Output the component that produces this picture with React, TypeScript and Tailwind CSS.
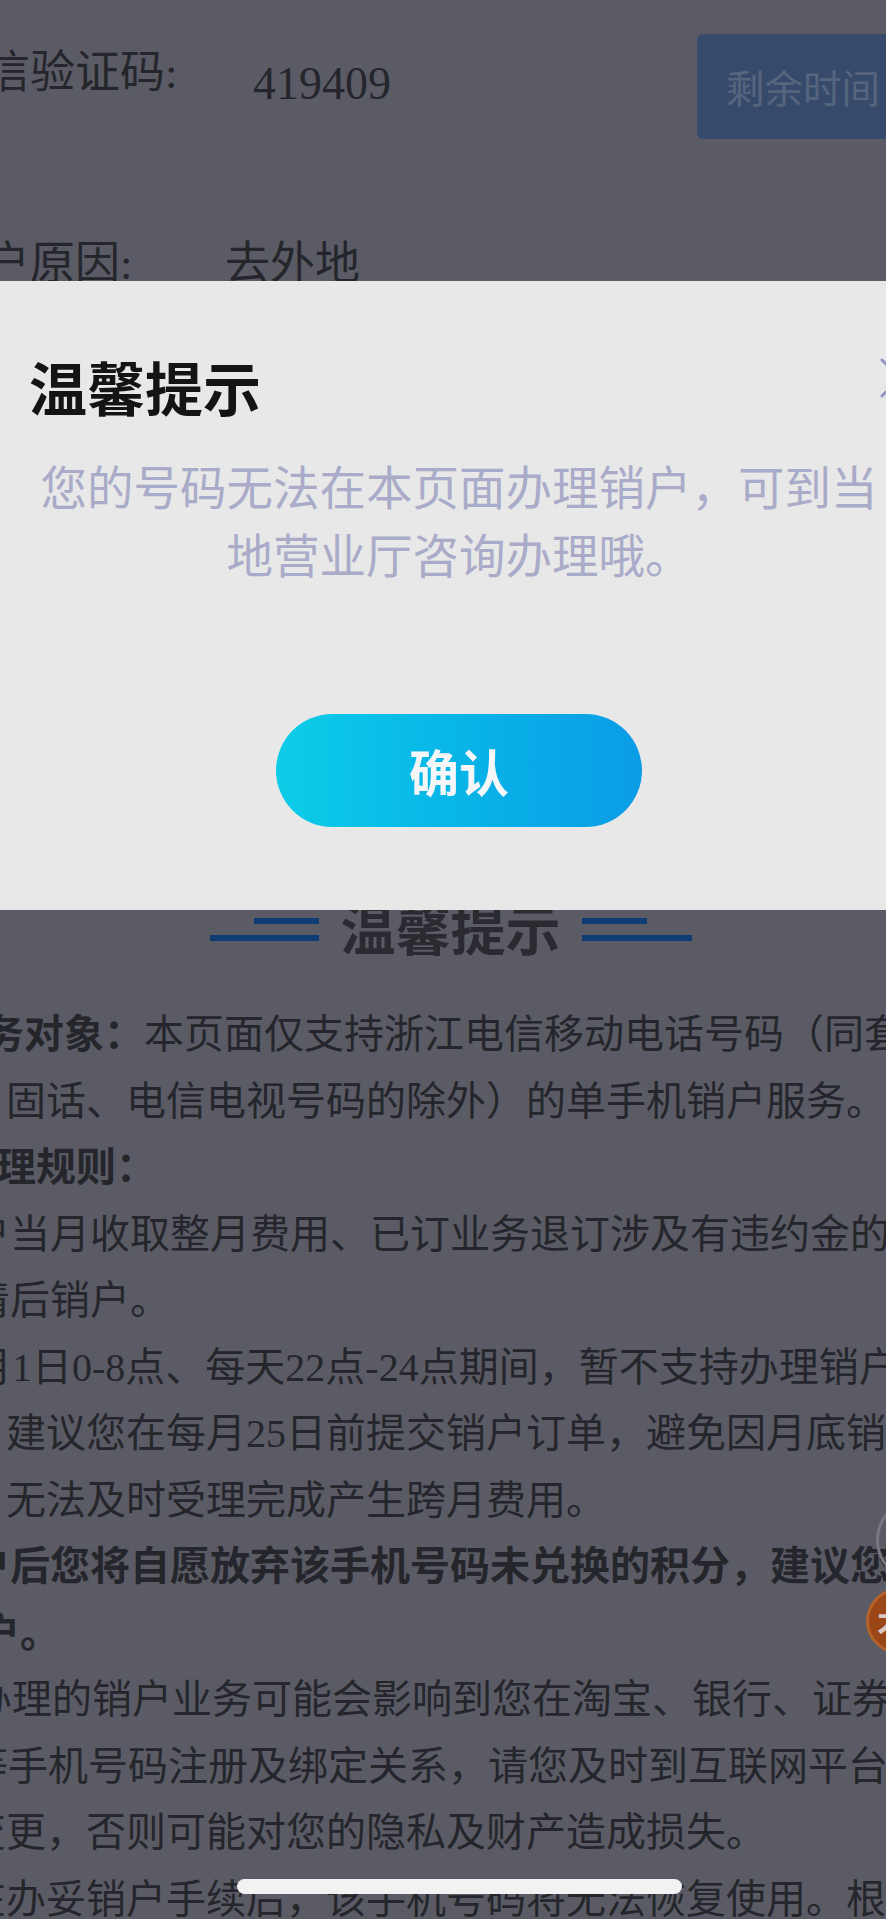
import React from "react";

export default function App() {
  return (
    <div className="relative h-[1919px] w-[886px] overflow-hidden bg-[#5a5b65] font-['Liberation_Serif','Noto_Sans_CJK_SC',serif] text-[#25262b]">
      {/* Row 1 */}
      <div className="flex items-start pt-[34px]">
        <div className="-ml-[60px] mt-[17px] w-[313px] shrink-0 whitespace-nowrap text-[45px] leading-[45px]">
          短信验证码:
        </div>
        <div className="mt-[27px] whitespace-nowrap text-[46px] leading-[46px]">419409</div>
        <div className="-mr-[31px] ml-auto flex h-[105px] w-[220px] shrink-0 items-center whitespace-nowrap rounded-[6px] bg-[#364b6b] pl-[29px] font-['Noto_Sans_CJK_SC',sans-serif] text-[38.5px] text-[#56657e]">
          剩余时间
        </div>
      </div>

      {/* Row 2 */}
      <div className="mt-[103px] flex items-start">
        <div className="-ml-[60px] w-[285px] shrink-0 whitespace-nowrap text-[45px] leading-[45px]">用户原因:</div>
        <div className="whitespace-nowrap text-[45px] leading-[45px]">去外地</div>
      </div>

      {/* Section header */}
      <div className="mt-[612px] flex h-[55px] items-start justify-center pl-[16px] font-['Noto_Sans_CJK_SC',sans-serif]">
        <div className="mt-[19px] flex flex-col items-end gap-[11px]">
          <div className="h-[6px] w-[65px] bg-[#0f3c72]" />
          <div className="h-[6px] w-[109px] bg-[#0f3c72]" />
        </div>
        <div className="mx-[21px] text-[55px] font-bold leading-[55px] text-[#2a2b31]">温馨提示</div>
        <div className="mt-[19px] flex flex-col items-start gap-[11px]">
          <div className="h-[6px] w-[65px] bg-[#0f3c72]" />
          <div className="h-[6px] w-[110px] bg-[#0f3c72]" />
        </div>
      </div>

      {/* Body */}
      <div className="mt-[48px] text-[40px] leading-[66.5px]">
        <div className="-ml-[56px] whitespace-nowrap">
          <span className="font-bold">服务对象：</span>本页面仅支持浙江电信移动电话号码（同套餐
        </div>
        <div className="ml-[6px] whitespace-nowrap">固话、电信电视号码的除外）的单手机销户服务。</div>
        <div className="-ml-[44px] whitespace-nowrap font-bold">办理规则：</div>
        <div className="-ml-[70px] whitespace-nowrap">销户当月收取整月费用、已订业务退订涉及有违约金的</div>
        <div className="-ml-[70px] whitespace-nowrap">结清后销户。</div>
        <div className="-ml-[68px] whitespace-nowrap">每月1日0-8点、每天22点-24点期间，暂不支持办理销户</div>
        <div className="ml-[6px] whitespace-nowrap">建议您在每月25日前提交销户订单，避免因月底销</div>
        <div className="ml-[6px] whitespace-nowrap">无法及时受理完成产生跨月费用。</div>
        <div className="-ml-[70px] whitespace-nowrap font-bold">销户后您将自愿放弃该手机号码未兑换的积分，建议您</div>
        <div className="-ml-[60px] whitespace-nowrap font-bold">销户。</div>
        <div className="-ml-[28px] whitespace-nowrap">办理的销户业务可能会影响到您在淘宝、银行、证券</div>
        <div className="-ml-[32px] whitespace-nowrap">等手机号码注册及绑定关系，请您及时到互联网平台</div>
        <div className="-ml-[34px] whitespace-nowrap">变更，否则可能对您的隐私及财产造成损失。</div>
        <div className="-ml-[34px] whitespace-nowrap">在办妥销户手续后，该手机号码将无法恢复使用。根据</div>
      </div>

      {/* Floating widgets at right edge */}
      <div className="absolute left-[876px] top-[1498px] h-[84px] w-[84px] rounded-full border-[3px] border-[#7a7780]" />
      <div className="absolute left-[866px] top-[1588px] flex h-[66px] w-[66px] items-center justify-center rounded-full border-[3px] border-[#b4622c] bg-[#9a4616] font-['Noto_Sans_CJK_SC',sans-serif] text-[30px] font-bold text-[#d9c9bf]">
        <span className="-ml-[14px]">才</span>
      </div>

      {/* Modal */}
      <div className="absolute left-0 top-[281px] h-[629px] w-full bg-[#e8e8e8] font-['Noto_Sans_CJK_SC',sans-serif]">
        <div className="relative pl-[29px] pt-[76px]">
          <div className="text-[58px] font-bold leading-[58px] text-[#141414]">温馨提示</div>
          <svg
            className="absolute left-[880px] top-[77px]"
            width="40"
            height="40"
            viewBox="0 0 40 40"
            fill="none"
            stroke="#9396c2"
            strokeWidth="3"
            strokeLinecap="round"
          >
            <path d="M2 2 L38 38 M38 2 L2 38" />
          </svg>
        </div>
        <div className="mt-[36px] pl-[32px] text-center text-[46.5px] leading-[68px] text-[#a9abc9]">
          您的号码无法在本页面办理销户，可到当
          <br />
          地营业厅咨询办理哦。
        </div>
        <div className="mt-[127px] flex justify-center pl-[32px]">
          <button className="flex h-[113px] w-[366px] items-center justify-center rounded-full bg-gradient-to-r from-[#0ecde8] to-[#0c9ce6] text-[50px] font-bold text-[#f4f6f8]">
            确认
          </button>
        </div>
      </div>

      {/* Home indicator */}
      <div className="absolute left-[237px] top-[1879px] h-[15px] w-[445px] rounded-full bg-[#f2f2f2]" />
    </div>
  );
}
